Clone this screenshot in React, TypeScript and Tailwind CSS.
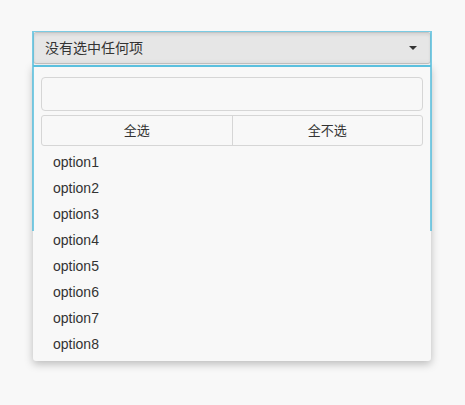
import { useState } from "react";

const options = ["option1", "option2", "option3", "option4", "option5", "option6", "option7", "option8"];

export default function App() {
  const [selected, setSelected] = useState<string[]>([]);

  return (
    <div
      className="min-h-[405px] w-[465px] bg-[#f8f8f8] pt-[32px] pl-[33px] text-[14px] text-[#333]"
      style={{ fontFamily: '"Liberation Sans", "Noto Sans CJK SC", sans-serif' }}
    >
      <div className="relative w-[398px]">
        {/* focus outline, open at the bottom */}
        <div className="pointer-events-none absolute -left-px -top-px z-10 h-[200px] w-[400px] border-x-2 border-t border-[#5bc0de] opacity-80" />

        {/* toggle button */}
        <button className="flex h-[32px] w-full items-center justify-between rounded-[3px] border border-[#c4c4c4] bg-[#e6e6e6] pl-[11px] pr-[13px] text-left shadow-[inset_0_2px_3px_rgba(0,0,0,0.08)]">
          <span>{selected.length ? selected.join(", ") : "没有选中任何项"}</span>
          <span className="h-0 w-0 border-x-[4px] border-t-[4px] border-x-transparent border-t-[#333]" />
        </button>

        {/* menu */}
        <div className="mt-px w-full rounded-b-[3px] border-t-[2px] border-[#5bc0de] bg-[#f8f8f8] px-[8px] pt-[10px] pb-[4px] shadow-[0_3px_8px_rgba(0,0,0,0.25)]">
          <input className="block h-[34px] w-full rounded-[4px] border border-[#d6d6d6] bg-[#f8f8f8] outline-none" />
          <div className="mt-[4px] flex h-[31px] rounded-[3px] border border-[#d6d6d6] text-[13px]">
            <button className="flex-1 border-r border-[#d6d6d6]" onClick={() => setSelected(options)}>
              全选
            </button>
            <button className="flex-1" onClick={() => setSelected([])}>
              全不选
            </button>
          </div>
          <ul className="mt-[3px]">
            {options.map((o) => (
              <li key={o} className="flex h-[26px] items-center pl-[12px]">
                {o}
              </li>
            ))}
          </ul>
        </div>
      </div>
    </div>
  );
}
